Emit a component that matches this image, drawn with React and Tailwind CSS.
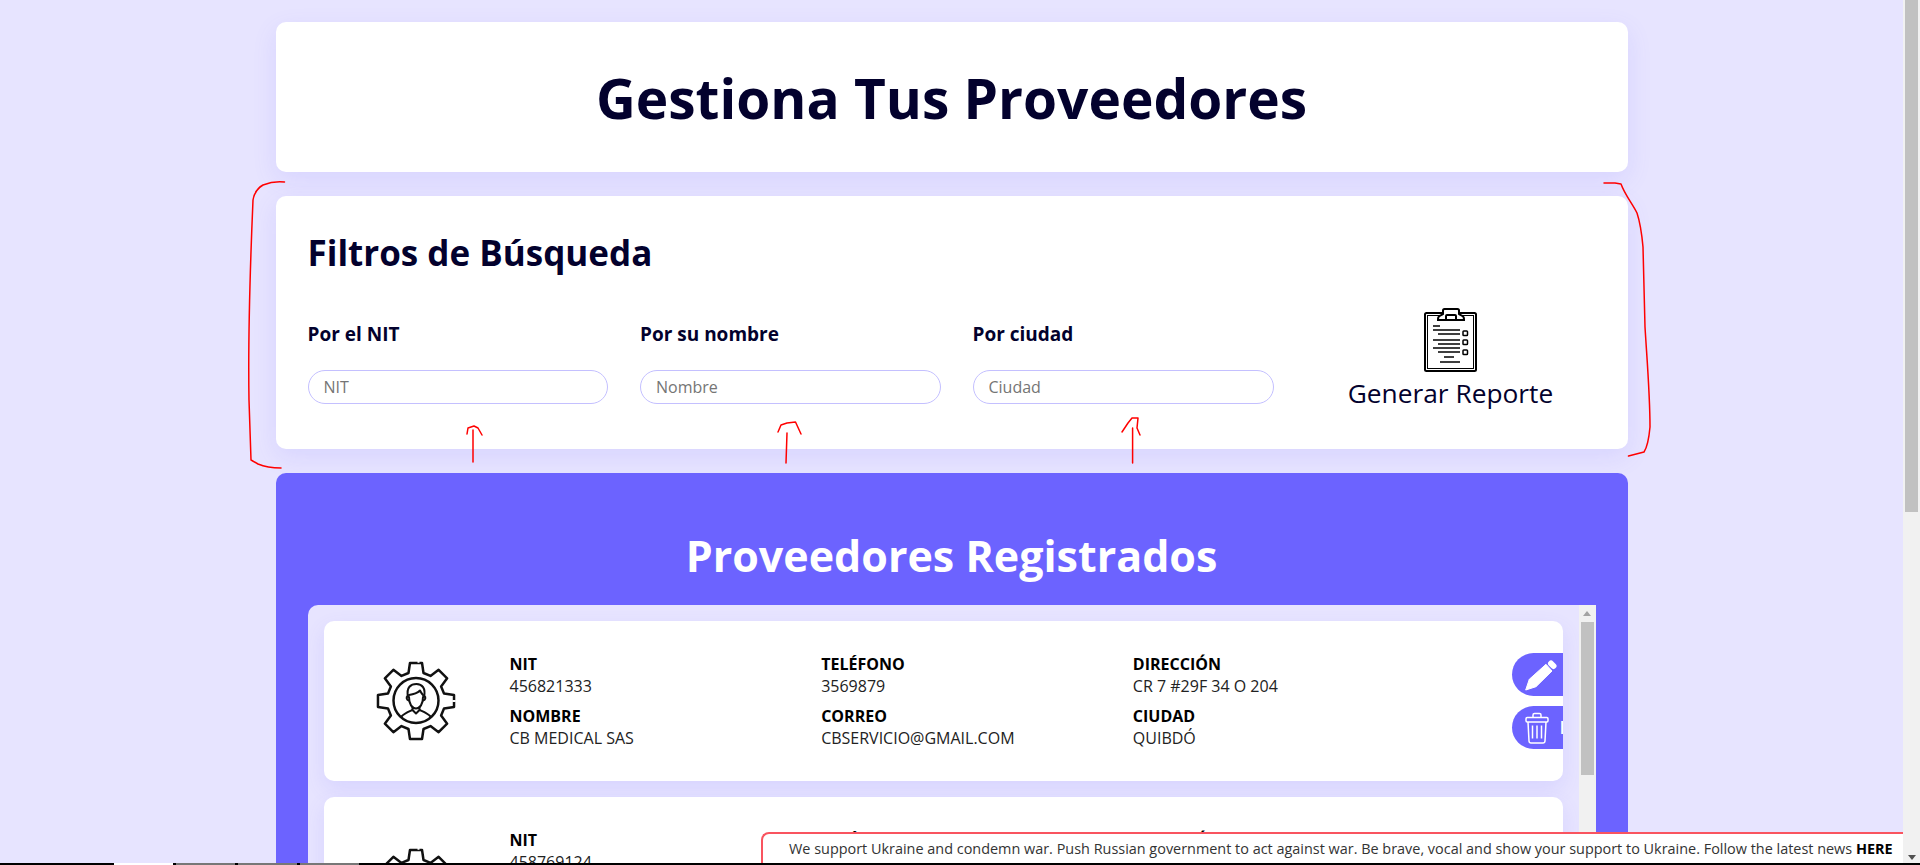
const GEAR = (() => {
  const c = 40, cy = 40, rO = 38.5, rI = 29;
  let d = "";
  for (let i = 0; i < 8; i++) {
    const a = (i * 45 - 90) * Math.PI / 180;
    const p = (r, off) => {
      const t = a + off * Math.PI / 180;
      return `${(c + r * Math.cos(t)).toFixed(2)} ${(cy + r * Math.sin(t)).toFixed(2)}`;
    };
    d += `${i === 0 ? "M" : "L"}${p(rI, -15)} L${p(rO, -9)} L${p(rO, 9)} L${p(rI, 15)} `;
  }
  return d + "Z";
})();

function GearIcon() {
  return (
    <svg width="80" height="80" viewBox="0 0 80 80" fill="none" stroke="#111" strokeWidth="2.500" strokeLinejoin="round" strokeLinecap="round" className="shrink-0">
      <path d={GEAR} />
      <path d="M41.500 0 h2 M78 39 v2" stroke="#fff" strokeWidth="3.500" strokeLinecap="butt" />
      <circle cx="40" cy="39.500" r="22.500" />
      <g strokeWidth="2">
        <path d="M32 36 C30 26 35 23 40.500 23 C46 23 50 27 48 36" />
        <path d="M33 36 C33 43 36 47.500 40 47.500 C44 47.500 47 43 47 36" />
        <path d="M33 34 C37 33.500 42 31.500 44 29.500 C45 31.500 46 33 47 34" />
        <path d="M31.500 35 C30 36 30.500 39 32.800 39.500 M48.500 35 C50 36 49.500 39 47.200 39.500" />
        <path d="M36.500 46 V49 L40 52.500 L43.500 49 V46" />
        <path d="M25.500 55.500 C28 52.500 32 51 36.500 49 M43.500 49 C48 51 52 52.500 54.500 55.500" />
      </g>
    </svg>
  );
}

function ClipboardIcon() {
  return (
    <svg width="64" height="64" viewBox="0 0 64 64" fill="none" stroke="#000" strokeWidth="2" className="shrink-0">
      <rect x="6" y="5" width="51" height="58" rx="1.500" />
      <rect x="8.500" y="7.500" width="46" height="53" strokeWidth="1" />
      <path d="M19 11 C19 7 22 8 24 6 V2.500 Q24 1 25.500 1 H38.500 Q40 1 40 2.500 V6 C42 8 45 7 45 11 V12 H19 Z" fill="#fff" />
      <rect x="27" y="7" width="10" height="5" rx="1" />
      <path d="M14 18 H21 M14 22 H41 M19 26 H41 M14 32 H41 M19 36 H41 M14 40 H41 M19 44 H41 M25 49 H35 M21 54 H41" strokeWidth="1.700" />
      <rect x="44" y="23" width="4.500" height="4.500" rx="0.800" strokeWidth="1.500" />
      <rect x="44" y="32" width="4.500" height="4.500" rx="0.800" strokeWidth="1.500" />
      <rect x="44" y="42" width="4.500" height="4.500" rx="0.800" strokeWidth="1.500" />
    </svg>
  );
}

function PencilIcon() {
  return (
    <svg width="32" height="34" viewBox="0 0 32 34" className="shrink-0" fill="#fff">
      <path d="M0.700 32 L4.300 21.300 L21 6.300 L27 13 L11 28.700 Z" stroke="#fff" strokeWidth="1" strokeLinejoin="round" />
      <path d="M26 5.500 L28.500 8" stroke="#fff" strokeWidth="6" strokeLinecap="round" />
    </svg>
  );
}

function TrashIcon() {
  return (
    <svg width="24" height="32" viewBox="0 0 24 32" fill="none" stroke="#fff" strokeWidth="1.500" strokeLinejoin="round" className="shrink-0">
      <rect x="1" y="5.500" width="22" height="4.500" rx="1.200" />
      <path d="M8 5.500 V3 Q8 1.500 9.500 1.500 H14.500 Q16 1.500 16 3 V5.500" />
      <path d="M3 10 L4 29 Q4.200 31 6 31 H18 Q19.800 31 20 29 L21 10" />
      <path d="M7.500 13.500 V26.500 M12 13.500 V26.500 M16.500 13.500 V26.500" />
    </svg>
  );
}

function Field({ label, value }) {
  return (
    <div className="pr-4 text-[16px] leading-[22px] text-[#000]">
      <div className="font-bold uppercase">{label}</div>
      <div className="text-[#222]">{value}</div>
    </div>
  );
}

function ActionButton({ icon, text }) {
  return (
    <div className="flex h-[43px] w-[120px] shrink-0 items-center gap-[11px] rounded-l-[22px] bg-[#6c63ff] pl-[13px] text-[18px] font-semibold text-white">
      {icon}
      <span>{text}</span>
    </div>
  );
}

function ProviderCard({ p }) {
  return (
    <div className="flex shrink-0 items-center overflow-hidden rounded-[10px] bg-white pl-[52px] shadow-[0_8px_20px_rgba(108,99,255,0.12)]">
      <GearIcon />
      <div className="ml-[53px] grid w-[936px] shrink-0 grid-cols-3 gap-y-2 py-[32px] pl-px">
        <Field label="NIT" value={p.nit} />
        <Field label="Teléfono" value={p.tel} />
        <Field label="Dirección" value={p.dir} />
        <Field label="Nombre" value={p.nombre} />
        <Field label="Correo" value={p.correo} />
        <Field label="Ciudad" value={p.ciudad} />
      </div>
      <div className="ml-[67px] flex shrink-0 flex-col gap-[10px]">
        <ActionButton icon={<PencilIcon />} text="Editar" />
        <ActionButton icon={<TrashIcon />} text="Eliminar" />
      </div>
    </div>
  );
}

const providers = [
  { nit: "456821333", tel: "3569879", dir: "CR 7 #29F 34 O 204", nombre: "CB MEDICAL SAS", correo: "CBSERVICIO@GMAIL.COM", ciudad: "QUIBDÓ" },
  { nit: "458769124", tel: "3154879", dir: "CL 10 #12 45", nombre: "DISTRIBUCIONES Y SUMINISTROS MEDICOS DEL PACIFICO", correo: "VENTAS@MEDISUMINISTROS.COM", ciudad: "BOGOTÁ" },
];

function Filter({ label, placeholder }) {
  return (
    <div className="flex flex-col">
      <label className="text-[19px] font-bold leading-[25px] text-[#03012d]">{label}</label>
      <input
        placeholder={placeholder}
        className="mt-[23px] h-[34px] w-full rounded-full border border-[#c4c0ff] bg-white px-[15px] text-[16px] outline-none placeholder:text-[#757575]"
      />
    </div>
  );
}

function Annotations() {
  return (
    <svg className="pointer-events-none absolute left-0 top-0" width="1920" height="865" fill="none" stroke="#f00" strokeWidth="1.500" strokeLinecap="round" strokeLinejoin="round">
      <path d="M284.500 182 C275 181 268 183 263 185 C256 189 254 194 253 200 C250 270 248 340 249 400 L251 460 L258 464 C265 467 273 468 281 468" />
      <path d="M473 462 V430 M467 434 L468 428 L474 426 L478 428 L482 435" />
      <path d="M786 463 L787 433 M778 432 L781 425 L787 423 L795.500 422 L801 434" />
      <path d="M1132.600 463 V428 M1122 432 L1128 423 L1132 418 L1138 418 L1137 428 L1140 435" />
      <path d="M1604 183 L1615 183 L1621 184 C1625 195 1632 203 1637 213 C1641 225 1642 236 1643 247 L1645 327 C1647 360 1650 395 1650 427 C1649 438 1648 446 1644 452 L1628.500 456" />
    </svg>
  );
}

export default function App() {
  return (
    <div className="relative flex h-[865px] w-full overflow-hidden bg-[#e7e4ff] font-['Open_Sans',sans-serif] text-[#03012d]">
      <main className="min-w-0 flex-1 pt-[22px]">
        <div className="mx-auto flex w-[1352px] flex-col gap-6">
          <section className="flex h-[150px] items-center justify-center rounded-[10px] bg-white shadow-[0_8px_24px_rgba(108,99,255,0.12)]">
            <h1 className="text-[55px] font-bold leading-none">Gestiona Tus Proveedores</h1>
          </section>

          <section className="h-[253px] rounded-[10px] bg-white px-8 pt-[32px] shadow-[0_8px_24px_rgba(108,99,255,0.12)]">
            <h2 className="text-[35px] font-bold leading-[50px]">Filtros de Búsqueda</h2>
            <div className="mt-[44px] grid grid-cols-[300.5px_300.5px_301px_1fr] gap-8">
              <Filter label="Por el NIT" placeholder="NIT" />
              <Filter label="Por su nombre" placeholder="Nombre" />
              <Filter label="Por ciudad" placeholder="Ciudad" />
              <div className="-mt-[14px] flex flex-col items-center">
                <ClipboardIcon />
                <span className="mt-[5px] text-[26.300px] leading-[33px]">Generar Reporte</span>
              </div>
            </div>
          </section>

          <section className="rounded-t-[10px] bg-[#6c63ff] px-8 pt-[55px]">
            <h2 className="text-center text-[43px] font-bold leading-[55px] text-white">Proveedores Registrados</h2>
            <div className="mt-[22px] flex h-[420px] overflow-hidden rounded-tl-[10px] bg-[#e7e4ff]">
              <div className="flex min-w-0 flex-1 flex-col gap-4 p-4">
                {providers.map((p) => <ProviderCard key={p.nit} p={p} />)}
              </div>
              <div className="relative w-[17px] shrink-0 bg-[#f1f1f1]">
                <div className="mx-auto mt-[6px] h-0 w-0 border-x-[4px] border-b-[5px] border-x-transparent border-b-[#a3a3a3]" />
                <div className="mx-[2px] mt-[6px] h-[153px] bg-[#c1c1c1]" />
              </div>
            </div>
          </section>
        </div>
      </main>

      <div className="relative h-full w-[17px] shrink-0 bg-[#f1f1f1]">
        <div className="mx-[2px] h-[512px] bg-[#c1c1c1]" />
      </div>
      <div className="absolute bottom-[5px] right-[4px] h-0 w-0 border-x-[4px] border-t-[5px] border-x-transparent border-t-[#505050]" />

      <Annotations />

      <div className="absolute bottom-[2px] left-[761px] right-[17px] flex h-[31px] items-center rounded-tl-lg border-l-2 border-t-2 border-[#f9545f] bg-white pl-[26px] text-[14.430px] text-[#333]">
        <span className="whitespace-nowrap">We support Ukraine and condemn war. Push Russian government to act against war. Be brave, vocal and show your support to Ukraine. Follow the latest news <b className="text-black">HERE</b></span>
      </div>

      <div className="absolute bottom-0 left-0 flex h-[2px] w-full gap-[3px] bg-black pl-[114px]">
        <div className="h-full w-[59px] bg-white" />
        <div className="h-full w-[59px] bg-[#777]" />
        <div className="h-full w-[59px] bg-[#777]" />
        <div className="h-full w-[59px] bg-[#777]" />
      </div>
    </div>
  );
}
